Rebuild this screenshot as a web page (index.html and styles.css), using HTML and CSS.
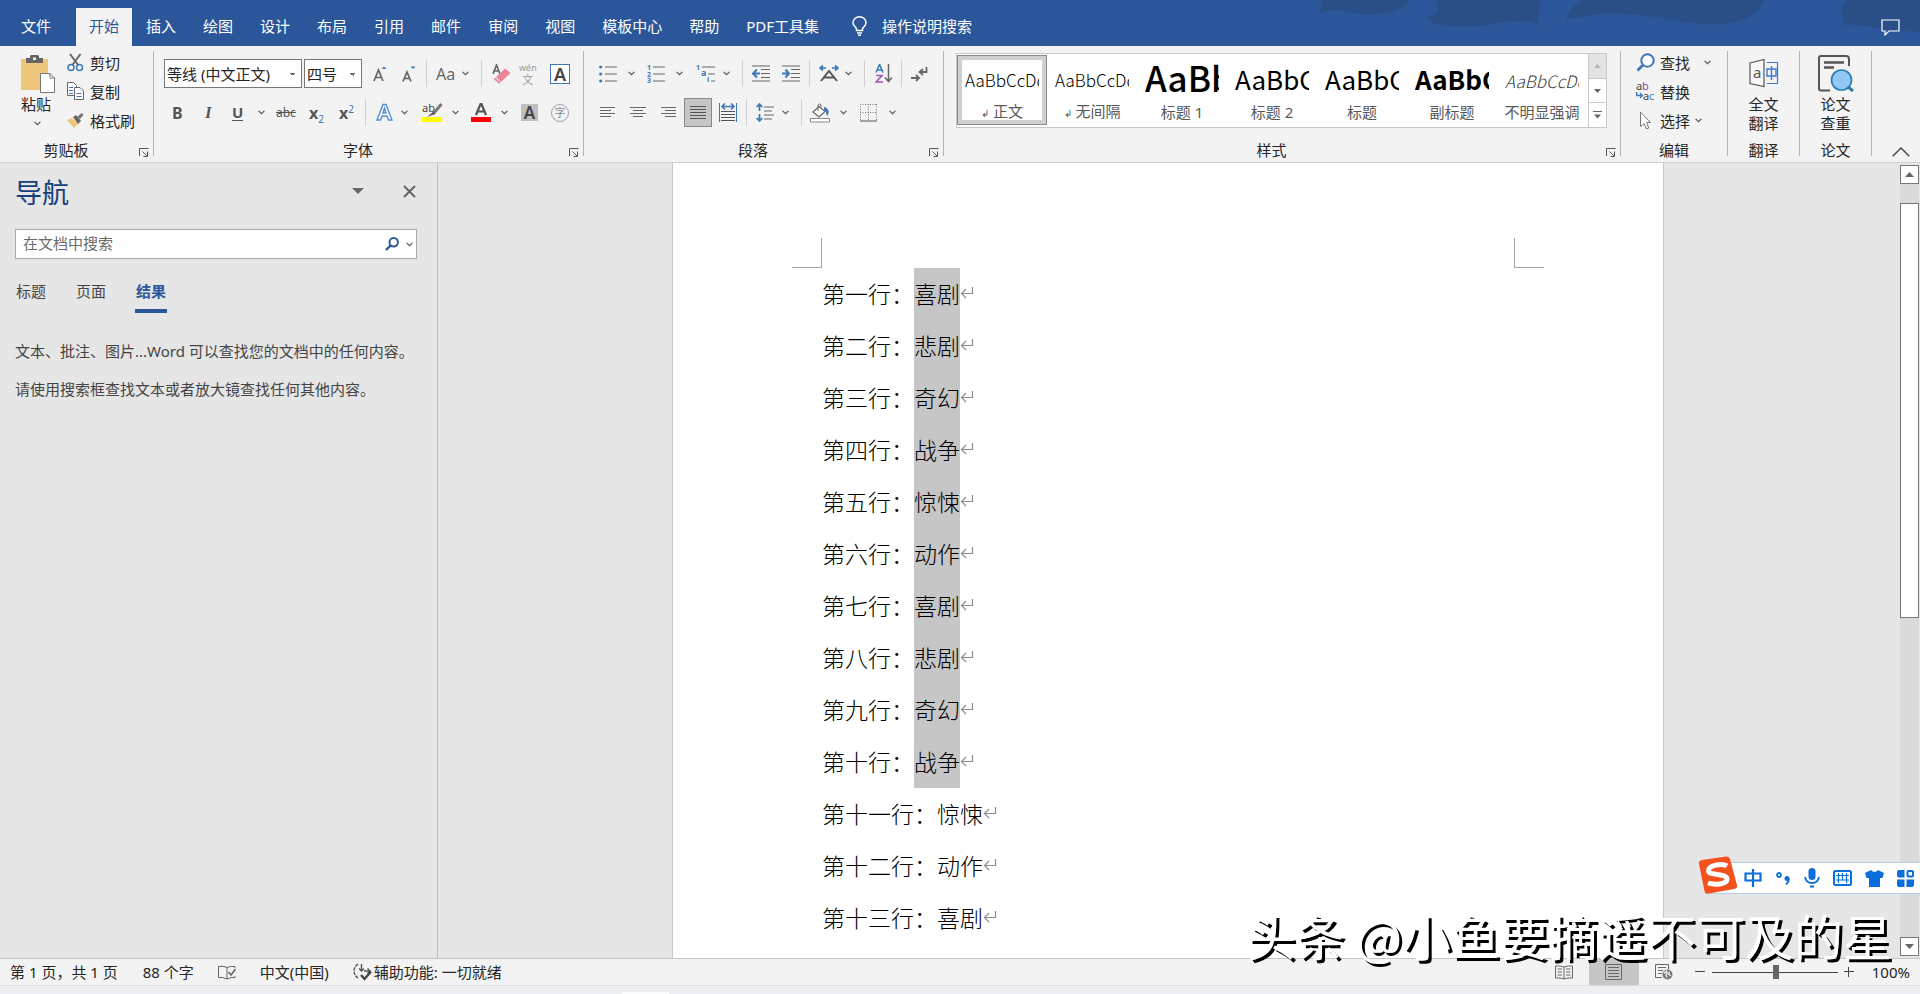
FILE: index.html
```html
<!DOCTYPE html>
<html lang="zh-CN">
<head>
<meta charset="utf-8">
<title>Word</title>
<link rel="stylesheet" href="styles.css">
</head>
<body>
<svg class="defs" aria-hidden="true">
  <symbol id="chev" viewBox="0 0 7 5"><path d="M.6.8 3.5 3.7 6.4.8" fill="none" stroke="#555" stroke-width="1.2"/></symbol>
  <symbol id="ret" viewBox="0 0 14 13"><path d="M12.500 0V6.500H2M6 2 1.500 6.500 6 11" fill="none" stroke="#8c8c8c" stroke-width="1.200"/></symbol>
  <symbol id="launch" viewBox="0 0 10 9"><path d="M.5 8V.5H9.500M3.500 3.500 8 8M8.500 3.500V8.500H4.500" fill="none" stroke="#555"/></symbol>
</svg>

<header class="tabbar">
  <svg class="swirl" width="610" height="46" viewBox="0 0 610 46" aria-hidden="true"><g fill="#2a4f87"><path d="M12 0 10 13C20 9 34 10 46 13S80 15 97 5L98 0Z"/><path d="M115 14C122 19 132 14 126 4L128 0H230L228 25C212 17 192 22 174 25S120 30 115 14Z"/><path d="M256 20C258 8 268 4 274 0H454C450 18 420 26 390 24 350 20 310 5 256 20Z"/><path d="M536 0C530 10 531 18 534 20L533 27C540 22 552 26 565 28L575 30 610 32V0Z"/></g></svg>
  <nav class="tabs">
    <button class="tab file">文件</button><button class="tab on">开始</button><button class="tab">插入</button><button class="tab">绘图</button><button class="tab">设计</button><button class="tab">布局</button><button class="tab">引用</button><button class="tab">邮件</button><button class="tab">审阅</button><button class="tab">视图</button><button class="tab">模板中心</button><button class="tab">帮助</button><button class="tab">PDF工具集</button>
  </nav>
  <button class="tell"><svg width="15" height="20" viewBox="0 0 15 20"><g fill="none" stroke="#fff" stroke-width="1.500"><path d="M4.500 14.500V13C4 11 1 10 1 6.800A6.500 6 0 0 1 14 6.800C14 10 11 11 10.500 13V14.500Z"/><path d="M5 17H10M6 19.200H9"/></g></svg>操作说明搜索</button>
  <button class="comment" aria-label="批注"><svg width="19" height="17" viewBox="0 0 19 17"><path d="M1 1H18V12H8L4 16V12H1Z" fill="none" stroke="#fff" stroke-width="1.200"/></svg></button>
</header>

<section class="ribbon">
  <div class="group g-clip">
    <div class="body clip">
      <button class="paste"><svg width="35" height="39" viewBox="0 0 35 39"><path d="M0 4H27V35H0Z" fill="#eec77d"/><path d="M5 8V3H9V1Q9 0 11 0H16Q18 0 18 1V3H22V8Z" fill="#666"/><path d="M12 2.500H15V5H12Z" fill="#f3f3f3"/><path d="M19.500 18.500H29L33.500 23V37.500H19.500Z" fill="#fff" stroke="#777"/><path d="M29 18.500V23H33.500" fill="none" stroke="#777"/></svg><span>粘贴</span><svg width="7" height="5"><use href="#chev"/></svg></button>
      <div class="stack">
        <button class="cmd"><svg width="17" height="19" viewBox="0 0 17 19"><g fill="none"><path d="M3 1 11.500 12.500M13.500 1 5 12.500" stroke="#666" stroke-width="2"/><circle cx="4" cy="14.500" r="3" stroke="#3f78b5" stroke-width="1.500"/><circle cx="12.500" cy="14.500" r="3" stroke="#3f78b5" stroke-width="1.500"/></g></svg>剪切</button>
        <button class="cmd"><svg width="17" height="19" viewBox="0 0 17 19"><g fill="#fff" stroke="#666"><path d="M.5.500H6.500L9.500 3.500V13.500H.5Z"/><path d="M7.500 5.500H13L16.500 9V17.500H7.500Z"/></g><path d="M2 5.500H6M2 8.500H6M2 11.500H6M9.500 11.500H14.500M9.500 14.500H14.500" stroke="#3f78b5"/></svg>复制</button>
        <button class="cmd"><svg width="17" height="17" viewBox="0 0 17 17"><path d="M0 8 5 6 11 12 7 16Z" fill="#eec77d"/><path d="M6 5 9 3 14 9 11 12Z" fill="#666"/><path d="M10 5 14.500 1 16.500 3 13 7Z" fill="#777"/></svg>格式刷</button>
      </div>
    </div>
    <div class="label"><span>剪贴板</span><button aria-label="剪贴板选项"><svg width="10" height="9"><use href="#launch"/></svg></button></div>
  </div>
  <div class="sep"></div>

  <div class="group g-font">
    <div class="body two">
      <div class="row font1">
        <select aria-label="字体"><option>等线 (中文正文)</option></select>
        <select aria-label="字号"><option>四号</option></select>
        <button aria-label="增大字号"><svg width="16" height="16" viewBox="0 0 16 16"><path d="M1 15 5.500 4 10 15M2.500 11.500H8.500" fill="none" stroke="#666" stroke-width="1.700"/><path d="M8.500 3 11 .5 13.500 3Z" fill="#3f78b5"/></svg></button>
        <button aria-label="减小字号"><svg width="16" height="16" viewBox="0 0 16 16"><path d="M1 15.500 5 6 9 15.500M2.500 12.500H7.500" fill="none" stroke="#666" stroke-width="1.700"/><path d="M8.500 .500 11 3 13.500.5Z" fill="#3f78b5"/></svg></button>
        <i></i>
        <button class="aa">Aa</button>
        <svg width="7" height="5"><use href="#chev"/></svg>
        <i></i>
        <button aria-label="清除格式"><svg width="19" height="20" viewBox="0 0 19 20"><path d="M1 10 4.500 1 8 10M2 7H7" fill="none" stroke="#666" stroke-width="1.700"/><path d="M4 13 13 4.500 18.500 9 9 18Z" fill="#e8879a"/><path d="M2.500 14.500 8 19" stroke="#e8879a" stroke-width="2"/></svg></button>
        <button class="wen"><span>wén</span><span>文</span></button>
        <button class="boxa">A</button>
      </div>
      <div class="row font2">
        <button class="bold">B</button>
        <button class="ital">I</button>
        <button class="und">U</button>
        <svg width="7" height="5"><use href="#chev"/></svg>
        <button class="strike">abc</button>
        <button class="scr">x<sub>2</sub></button>
        <button class="scr">x<sup>2</sup></button>
        <i></i>
        <button aria-label="文本效果"><svg width="17" height="19" viewBox="0 0 17 19"><path d="M1 17 7 1.500H10L16 17H12.500L11 13H6L4.500 17ZM7 10H10L8.500 5Z" fill="#fff" stroke="#4f8fd6" stroke-width="1.400"/></svg></button>
        <svg width="7" height="5"><use href="#chev"/></svg>
        <button aria-label="突出显示"><svg width="21" height="19" viewBox="0 0 21 19"><text x="0" y="9" class="t11">ab</text><path d="M19.500 1 11 11" stroke="#777" stroke-width="3"/><path d="M11 9 13 11 5 14Z" fill="#555"/><path d="M0 14H20V19H0Z" fill="#ff0"/></svg></button>
        <svg width="7" height="5"><use href="#chev"/></svg>
        <button aria-label="字体颜色"><svg width="21" height="19" viewBox="0 0 21 19"><path d="M5 12 9.500 1H10.500L15 12M6.500 8.500H13.500" fill="none" stroke="#555" stroke-width="2.200"/><path d="M0 14H20V19H0Z" fill="#f00"/></svg></button>
        <svg width="7" height="5"><use href="#chev"/></svg>
        <button class="shadea">A</button>
        <button class="zi">字</button>
      </div>
    </div>
    <div class="label"><span>字体</span><button aria-label="字体选项"><svg width="10" height="9"><use href="#launch"/></svg></button></div>
  </div>
  <div class="sep"></div>

  <div class="group g-para">
    <div class="body two">
      <div class="row para1">
        <button aria-label="项目符号"><svg width="19" height="18" viewBox="0 0 19 18"><g fill="#3f78b5"><circle cx="1.700" cy="2" r="1.600"/><circle cx="1.700" cy="9" r="1.600"/><circle cx="1.700" cy="16" r="1.600"/></g><path d="M6 2H18M6 9H18M6 16H18" stroke="#666"/></svg></button>
        <svg width="7" height="5"><use href="#chev"/></svg>
        <button aria-label="编号"><svg width="19" height="18" viewBox="0 0 19 18"><g class="num"><text x="0" y="5">1</text><text x="0" y="12">2</text><text x="0" y="18">3</text></g><path d="M6 2H18M6 9H18M6 16H18" stroke="#666"/></svg></button>
        <svg width="7" height="5"><use href="#chev"/></svg>
        <button aria-label="多级列表"><svg width="20" height="18" viewBox="0 0 20 18"><g class="num"><text x="0" y="5">1</text><text x="5" y="11" class="t10">a</text><text x="11" y="17">i</text></g><path d="M6 2H19M12 9H19M15 16H19" stroke="#666"/></svg></button>
        <svg width="7" height="5"><use href="#chev"/></svg>
        <i></i>
        <button aria-label="减少缩进"><svg width="18" height="17" viewBox="0 0 18 17"><path d="M0 1H18M9 4.500H18M9 8.500H18M9 12.500H18M0 16H18" stroke="#666" stroke-width="1.200"/><path d="M8 8.500H2M5 4.500 1 8.500 5 12.500" fill="none" stroke="#3f78b5" stroke-width="2"/></svg></button>
        <button aria-label="增加缩进"><svg width="18" height="17" viewBox="0 0 18 17"><path d="M0 1H18M9 4.500H18M9 8.500H18M9 12.500H18M0 16H18" stroke="#666" stroke-width="1.200"/><path d="M0 8.500H6M3.500 4.500 7 8.500 3.500 12.500" fill="none" stroke="#3f78b5" stroke-width="2"/></svg></button>
        <i></i>
        <button aria-label="中文版式"><svg width="20" height="17" viewBox="0 0 20 17"><path d="M2 16 10 6 18 16M5.500 12.500H14.500" fill="none" stroke="#555" stroke-width="2"/><path d="M7 3H1.500M4 .5 1 3 4 5.500M13 3H18.500M16 .5 19 3 16 5.500" fill="none" stroke="#3f78b5" stroke-width="1.700"/></svg></button>
        <svg width="7" height="5"><use href="#chev"/></svg>
        <i></i>
        <button aria-label="排序"><svg width="18" height="19" viewBox="0 0 18 19"><path d="M1 8.500 4.500.5 8 8.500M2.500 6H6.500" fill="none" stroke="#3f78b5" stroke-width="1.600"/><path d="M1 11.500H7L1 18H8" fill="none" stroke="#9a5bb5" stroke-width="1.600"/><path d="M13.500 0V17.500M10 13.500 13.500 17.500 17 13.500" fill="none" stroke="#666" stroke-width="1.500"/></svg></button>
        <i></i>
        <button aria-label="显示编辑标记"><svg width="17" height="16" viewBox="0 0 17 16"><path d="M15.500 1V6H9M12 3 8.500 6 12 9M0 12H8M5 9 8 12 5 15" fill="none" stroke="#666" stroke-width="1.800"/></svg></button>
      </div>
      <div class="row para2">
        <button aria-label="左对齐"><svg width="15" height="11" viewBox="0 0 15 11"><path d="M0 .5H15M0 3.500H11M0 6.500H15M0 9.500H11" stroke="#666"/></svg></button>
        <button aria-label="居中"><svg width="16" height="11" viewBox="0 0 16 11"><path d="M0 .5H16M3 3.500H13M0 6.500H16M3 9.500H13" stroke="#666"/></svg></button>
        <button aria-label="右对齐"><svg width="15" height="11" viewBox="0 0 15 11"><path d="M0 .5H15M4 3.500H15M0 6.500H15M4 9.500H15" stroke="#666"/></svg></button>
        <button class="just" aria-label="两端对齐"><svg width="16" height="14" viewBox="0 0 16 14"><path d="M0 .5H16M0 3.500H16M0 6.500H16M0 9.500H16M0 12.500H16" stroke="#555"/></svg></button>
        <button aria-label="分散对齐"><svg width="18" height="19" viewBox="0 0 18 19"><path d="M.5 0V19M17.500 0V19" stroke="#3f78b5"/><path d="M3 3.500H15M6 .5 3 3.500 6 6.500M12 .5 15 3.500 12 6.500" fill="none" stroke="#3f78b5" stroke-width="1.600"/><path d="M2 8.500H16M2 11.500H16M2 14.500H16M2 17.500H16" stroke="#555"/></svg></button>
        <i></i>
        <button aria-label="行距"><svg width="18" height="19" viewBox="0 0 18 19"><path d="M3.500 1V8M3.500 11V18M.7 4 3.500 1 6.300 4M.7 15 3.500 18 6.300 15" fill="none" stroke="#3f78b5" stroke-width="1.700"/><path d="M8 4H18M8 8H16M8 12H18M8 16H16" stroke="#666"/></svg></button>
        <svg width="7" height="5"><use href="#chev"/></svg>
        <i></i>
        <button aria-label="底纹"><svg width="20" height="20" viewBox="0 0 20 20"><path d="M3 9 9 3.500 15 8.500 9 14Z" fill="#fff" stroke="#666" stroke-width="1.200"/><path d="M8 8V2Q9.500-.5 11 2V4" fill="none" stroke="#666"/><path d="M14 4C19 5 20 10 17 13 16 10 16 8 14 7Z" fill="#3f78b5"/><path d="M.5 15.500H19.500V19H.5Z" fill="#fff" stroke="#888"/></svg></button>
        <svg width="7" height="5"><use href="#chev"/></svg>
        <button aria-label="边框"><svg width="17" height="18" viewBox="0 0 17 18"><path d="M0 .5H17M0 8.500H17M.5 0V17M8.500 0V17M16.500 0V17" stroke="#777" stroke-dasharray="1 1.500"/><path d="M0 17H17" stroke="#555"/></svg></button>
        <svg width="7" height="5"><use href="#chev"/></svg>
      </div>
    </div>
    <div class="label"><span>段落</span><button aria-label="段落选项"><svg width="10" height="9"><use href="#launch"/></svg></button></div>
  </div>
  <div class="sep"></div>

  <div class="group g-style">
    <div class="body sty">
      <div class="gallery">
        <div class="items">
          <button class="item on"><span class="pv">AaBbCcDd</span><span class="nm"><small>↲</small> 正文</span></button>
          <button class="item"><span class="pv">AaBbCcDd</span><span class="nm"><small>↲</small> 无间隔</span></button>
          <button class="item"><span class="pv h1">AaBb</span><span class="nm">标题 1</span></button>
          <button class="item"><span class="pv h2">AaBbC</span><span class="nm">标题 2</span></button>
          <button class="item"><span class="pv h2">AaBbC</span><span class="nm">标题</span></button>
          <button class="item"><span class="pv h2 strong">AaBbC</span><span class="nm">副标题</span></button>
          <button class="item"><span class="pv em">AaBbCcDd</span><span class="nm">不明显强调</span></button>
        </div>
        <div class="gscroll">
          <button class="off" aria-label="上一行"><svg width="7" height="4"><path d="M0 4 3.500 0 7 4Z" fill="#b5b5b5"/></svg></button>
          <button aria-label="下一行"><svg width="7" height="4"><path d="M0 0 3.500 4 7 0Z" fill="#666"/></svg></button>
          <button aria-label="其他"><svg width="9" height="8"><path d="M0 .5H9" stroke="#666"/><path d="M1 3.500 4.500 7.500 8 3.500Z" fill="#666"/></svg></button>
        </div>
      </div>
    </div>
    <div class="label"><span>样式</span><button aria-label="样式选项"><svg width="10" height="9"><use href="#launch"/></svg></button></div>
  </div>
  <div class="sep"></div>

  <div class="group g-edit">
    <div class="body">
      <div class="stack">
        <button class="cmd"><svg width="19" height="19" viewBox="0 0 19 19"><circle cx="11.500" cy="7.500" r="6.200" fill="#fff" stroke="#3f78b5" stroke-width="2"/><path d="M7 12 1.500 17.500" stroke="#3f78b5" stroke-width="2.800"/></svg>查找<svg class="far" width="7" height="5"><use href="#chev"/></svg></button>
        <button class="cmd"><svg width="19" height="19" viewBox="0 0 19 19"><g class="t11"><text x="0" y="8">a</text><text x="6" y="8" fill="#8a4bab">b</text><text x="7" y="18">a</text><text x="13" y="18" fill="#3f78b5">c</text></g><path d="M.7 10V13.500H6M4 11 6.500 13.500 4 16" fill="none" stroke="#3f78b5" stroke-width="1.300"/></svg>替换</button>
        <button class="cmd"><svg width="19" height="19" viewBox="0 0 19 19"><path d="M4.500 1V15.500L8 12.500 10.500 18 12.800 17 10.500 11.500H14.500Z" fill="#fff" stroke="#777"/></svg>选择<svg width="7" height="5"><use href="#chev"/></svg></button>
      </div>
    </div>
    <div class="label"><span>编辑</span></div>
  </div>
  <div class="sep"></div>

  <div class="group g-addin">
    <div class="body"><button class="big"><svg width="30" height="38" viewBox="0 0 30 38"><path d="M1 8 15 4.500V31.500L1 28.500Z" fill="#f8f8f8" stroke="#555" stroke-width="1.200"/><text x="4" y="23" class="t14">a</text><path d="M18 7.500H28.500V28.500H18" fill="none" stroke="#3a78d8" stroke-width="1.200"/><path d="M18 14H27V21H18ZM22.500 11V25" fill="none" stroke="#3a78d8" stroke-width="1.400"/></svg><span>全文</span><span>翻译</span></button></div>
    <div class="label"><span>翻译</span></div>
  </div>
  <div class="sep"></div>

  <div class="group g-addin">
    <div class="body"><button class="big"><svg width="36" height="38" viewBox="0 0 36 38"><path d="M12 35.500H3Q1 35.500 1 33.500V3Q1 1 3 1H28Q31 1 31 4V11" fill="none" stroke="#555" stroke-width="2"/><path d="M6 7.500H26M6 12.500H16" stroke="#555" stroke-width="2.500"/><path d="M29 31 35 36" stroke="#2c7cb0" stroke-width="3"/><circle cx="23.500" cy="25" r="10" fill="#93c8f6" stroke="#2c7cb0" stroke-width="1.700"/></svg><span>论文</span><span>查重</span></button></div>
    <div class="label"><span>论文</span></div>
  </div>
  <div class="sep"></div>
  <button class="collapse" aria-label="折叠功能区"><svg width="18" height="10" viewBox="0 0 18 10"><path d="M.7 9.300 9 1 17.300 9.300" fill="none" stroke="#444" stroke-width="1.400"/></svg></button>
</section>

<main class="work">
  <aside class="pane">
    <div class="phead"><h2>导航</h2><button aria-label="选项"><svg width="12" height="6"><path d="M0 0H12L6 6Z" fill="#666"/></svg></button><button aria-label="关闭"><svg width="13" height="13"><path d="M1 1 12 12M12 1 1 12" stroke="#666" stroke-width="2"/></svg></button></div>
    <div class="search"><input type="text" aria-label="在文档中搜索" placeholder="在文档中搜索"><button aria-label="搜索"><svg width="14" height="14" viewBox="0 0 14 14"><circle cx="8.700" cy="5.300" r="4.200" fill="none" stroke="#2b579a" stroke-width="2"/><path d="M5.500 8.500 1 13" stroke="#2b579a" stroke-width="2.400"/></svg></button><button aria-label="搜索选项"><svg width="7" height="5"><use href="#chev"/></svg></button></div>
    <div class="ptabs"><button>标题</button><button>页面</button><button class="on">结果</button></div>
    <p>文本、批注、图片...Word 可以查找您的文档中的任何内容。</p>
    <p>请使用搜索框查找文本或者放大镜查找任何其他内容。</p>
  </aside>
  <div class="canvas">
    <article class="page">
      <div class="marks"><b class="ml"></b><b class="mr"></b></div>
      <div class="text">
        <p>第一行：<mark>喜剧</mark><svg width="14" height="13"><use href="#ret"/></svg></p>
        <p>第二行：<mark>悲剧</mark><svg width="14" height="13"><use href="#ret"/></svg></p>
        <p>第三行：<mark>奇幻</mark><svg width="14" height="13"><use href="#ret"/></svg></p>
        <p>第四行：<mark>战争</mark><svg width="14" height="13"><use href="#ret"/></svg></p>
        <p>第五行：<mark>惊悚</mark><svg width="14" height="13"><use href="#ret"/></svg></p>
        <p>第六行：<mark>动作</mark><svg width="14" height="13"><use href="#ret"/></svg></p>
        <p>第七行：<mark>喜剧</mark><svg width="14" height="13"><use href="#ret"/></svg></p>
        <p>第八行：<mark>悲剧</mark><svg width="14" height="13"><use href="#ret"/></svg></p>
        <p>第九行：<mark>奇幻</mark><svg width="14" height="13"><use href="#ret"/></svg></p>
        <p>第十行：<mark>战争</mark><svg width="14" height="13"><use href="#ret"/></svg></p>
        <p>第十一行：惊悚<svg width="14" height="13"><use href="#ret"/></svg></p>
        <p>第十二行：动作<svg width="14" height="13"><use href="#ret"/></svg></p>
        <p>第十三行：喜剧<svg width="14" height="13"><use href="#ret"/></svg></p>
      </div>
    </article>
  </div>
  <div class="vbar">
    <button aria-label="向上滚动"><svg width="9" height="5"><path d="M0 5 4.500 0 9 5Z" fill="#666"/></svg></button>
    <div class="track"><div class="thumb"></div></div>
    <button aria-label="向下滚动"><svg width="9" height="5"><path d="M0 0H9L4.500 5Z" fill="#666"/></svg></button>
  </div>
</main>

<footer class="status">
  <span class="s-page">第 1 页，共 1 页</span>
  <span class="s-words">88 个字</span>
  <svg class="s-book" width="18" height="15" viewBox="0 0 18 15"><path d="M9 2.500Q5 .5.500 1.500V12.500Q5 12 9 14Q13 12 17 12.500V11M9 2.500V14M9 2.500Q12 1 17 1.500V3" fill="none" stroke="#666"/><path d="M10.500 7 13 10 17.500 4" fill="none" stroke="#666" stroke-width="1.600"/></svg>
  <span class="s-lang">中文(中国)</span>
  <svg class="s-acc" width="19" height="18" viewBox="0 0 19 18"><path d="M5 1Q1 4 1 8T5 15" fill="none" stroke="#555" stroke-width="1.400" stroke-dasharray="3.500 1"/><path d="M8.500 1V8M6 5.500 8.500 8 11 5.500M11 8H17M14.500 5.500 17 8 14.500 10.500" fill="none" stroke="#555" stroke-width="1.400"/><path d="M8 12 11.500 16 18 8.500" fill="none" stroke="#444" stroke-width="2.400"/></svg>
  <span class="s-ok">辅助功能: 一切就绪</span>
  <button class="view" aria-label="阅读视图"><svg width="18" height="15" viewBox="0 0 18 15"><path d="M9 2Q5 .5.500 1V13Q5 12.500 9 14Q13 12.500 17.500 13V1Q13 .5 9 2V14M2.500 4H7M2.500 7H7M2.500 10H7M11 4H15.500M11 7H15.500M11 10H15.500" fill="none" stroke="#666"/></svg></button>
  <button class="view on" aria-label="页面视图"><svg width="17" height="16" viewBox="0 0 17 16"><path d="M.5.500H16.500V15.500H.5ZM3 3.500H14M3 6.500H14M3 9.500H14M3 12.500H14" fill="none" stroke="#666"/></svg></button>
  <button class="view" aria-label="Web 版式"><svg width="18" height="16" viewBox="0 0 18 16"><path d="M7 13.500H.5V.5H13.500V5M3 3.500H11M3 6.500H8M3 9.500H7" fill="none" stroke="#666"/><circle cx="12.500" cy="10.500" r="5" fill="#777"/><path d="M9 9.500 11.500 7 12 9.500 11 11 12 13.500M14.500 7.500 13.500 10 16 12" fill="none" stroke="#f3f3f3" stroke-width="1.300"/></svg></button>
  <button class="zoom" aria-label="缩小"><svg width="10" height="10"><path d="M0 4.500H10" stroke="#444"/></svg></button>
  <input type="range" min="10" max="190" value="102" aria-label="显示比例">
  <button class="zoom" aria-label="放大"><svg width="10" height="10"><path d="M0 4.500H10M4.500 0V10" stroke="#444"/></svg></button>
  <span class="s-pct">100%</span>
</footer>
<div class="taskbar"><span></span></div>

<div class="ime">
  <svg class="logo" width="40" height="38" viewBox="0 0 40 38"><path d="M1 8Q0 5 4 4L28 .5Q31 0 32 3L39 29Q40 32 36 33L11 37.500Q7 38 6.500 35Z" fill="#f4511e"/><path d="M29 10C24 7 10 9 10.500 15 11 20 29 17 29 23 29 29 16 29 10 27" fill="none" stroke="#fff" stroke-width="5"/></svg>
  <svg width="18" height="18" viewBox="0 0 18 18"><path d="M1.500 4.500H16.500V11.500H1.500ZM9 0V18" fill="none" stroke="#0a6fdb" stroke-width="2.200"/></svg>
  <svg width="16" height="14" viewBox="0 0 16 14"><circle cx="4" cy="4" r="2" fill="none" stroke="#0a6fdb" stroke-width="1.800"/><circle cx="12" cy="7.500" r="2.500" fill="#0a6fdb"/><path d="M14 8Q14 11 11 13.500" fill="none" stroke="#0a6fdb" stroke-width="1.800"/></svg>
  <svg width="16" height="20" viewBox="0 0 16 20"><rect x="4.500" y="0" width="7" height="12" rx="3.500" fill="#0a6fdb"/><path d="M1 9Q2 15 8 15T15 9M6 18.500H10" fill="none" stroke="#0a6fdb" stroke-width="1.800"/></svg>
  <svg width="19" height="16" viewBox="0 0 19 16"><rect x="1" y="1" width="17" height="14" rx="1.500" fill="none" stroke="#0a6fdb" stroke-width="2"/><path d="M3 5.500H16M3 10H16M5.500 3V13M9.500 3V10M13.500 3V13" stroke="#0a6fdb" stroke-width="1.200"/></svg>
  <svg width="19" height="17" viewBox="0 0 19 17"><path d="M6 0Q9.500 4 13 0L19 3 17.500 8H15V17H4V8H1.500L0 3Z" fill="#0a6fdb"/></svg>
  <svg width="17" height="17" viewBox="0 0 17 17"><g fill="#0a6fdb"><path d="M2 0H7.500V7.500H2Q0 7.500 0 5.500V2Q0 0 2 0ZM0 9.500H7.500V17H2Q0 17 0 15ZM9.500 9.500H17V15Q17 17 15 17H9.500Z"/></g><rect x="10.500" y="1" width="5.500" height="5.500" rx="1" fill="none" stroke="#0a6fdb" stroke-width="2"/></svg>
</div>
<div class="sign">头条 @小鱼要摘遥不可及的星</div>
</body>
</html>
```
FILE: styles.css
```css
* { box-sizing: border-box; }
body {
  margin: 0;
  height: 100vh;
  display: flex;
  flex-direction: column;
  overflow: hidden;
  position: relative;
  background: #e6e6e6;
  color: #262626;
  font: 15px/20px "Noto Sans", "Noto Sans CJK SC", sans-serif;
}
button {
  margin: 0;
  padding: 0;
  border: 0;
  background: none;
  font: inherit;
  color: inherit;
  white-space: nowrap;
}
svg { display: block; flex: none; }
p, h2 { margin: 0; }
.defs { position: absolute; width: 0; height: 0; }

.tabbar {
  flex: none;
  height: 46px;
  display: flex;
  align-items: stretch;
  background: #2b579a;
  color: #fff;
  position: relative;
}
.swirl { position: absolute; right: 0; top: 0; }
.tabs { display: flex; gap: 1px; padding-top: 8px; }
.tab { padding: 0 13px 2px; height: 38px; }
.tab.file { padding: 0 24px 2px 21px; }
.tab.on { background: #f3f3f3; color: #2b579a; }
.tell { display: flex; align-items: center; gap: 15px; margin-left: 20px; padding-top: 6px; }
.comment { margin-left: auto; padding: 8px 20px 0 0; position: relative; }

.ribbon {
  flex: none;
  display: flex;
  height: 117px;
  background: #f3f3f3;
  border-bottom: 1px solid #d2d2d2;
}
.sep { width: 1px; margin: 5px 0 6px; background: #b5b5b5; }
.group { display: flex; flex-direction: column; flex: none; }
.g-clip { width: 153px; }
.g-font { width: 429px; }
.g-para { width: 359px; }
.g-style { flex: 1 1 0; min-width: 0; }
.g-edit { width: 106px; }
.g-addin { width: 71px; }
.body { height: 94px; }
.label { display: flex; align-items: center; height: 20px; }
.label span { flex: 1; text-align: center; }
.label button { width: 14px; padding-top: 4px; margin-left: 7px; }
.clip { display: flex; gap: 11px; padding-left: 21px; }
.paste { display: flex; flex-direction: column; align-items: flex-start; width: 35px; padding-top: 9px; }
.paste span { line-height: 20px; }
.paste svg:last-child { margin: 7px 0 0 13px; }
.stack { display: flex; flex-direction: column; padding-top: 2px; }
.cmd { display: flex; align-items: center; gap: 6px; height: 29px; }
.g-edit .stack { padding-left: 15px; }
.g-edit .cmd { gap: 5px; }
.cmd .far { margin-left: 9px; }
.two { display: flex; flex-direction: column; gap: 10px; padding-top: 13px; }
.row { display: grid; height: 29px; align-items: center; justify-items: start; }
.row i { width: 1px; height: 27px; background: #d0d0d0; }
.font1 { padding-left: 10px; grid-template-columns: 140px 69px 29px 24px 10px 26px 19px 11px 27px 31px 20px; }
.font2 { padding-left: 18px; grid-template-columns: 31px 29px 26px 18px 33px 30px 26px 11px 25px 21px 30px 19px 30px 20px 30px 18px; }
.para1 { padding-left: 15px; grid-template-columns: 29px 19px 29px 20px 27px 19px 10px 30px 27px 10px 26px 19px 11px 26px 10px 17px; }
.para2 { padding-left: 16px; grid-template-columns: 30px 31px 23px 35px 27px 10px 26px 19px 9px 30px 20px 29px 7px; }
select {
  appearance: none;
  width: 138px;
  height: 29px;
  margin: 0;
  padding: 0 2px;
  border: 1px solid #767676;
  border-radius: 0;
  background-color: #fff;
  background-image: linear-gradient(45deg, transparent 50%, #666 50%), linear-gradient(-45deg, transparent 50%, #666 50%);
  background-size: 3px 3px, 3px 3px;
  background-position: right 8px top 13px, right 5px top 13px;
  background-repeat: no-repeat;
  font: inherit;
  color: #262626;
}
select + select { width: 58px; }
.aa { font-size: 16px; color: #666; }
.wen { display: flex; flex-direction: column; align-items: center; font-size: 9px; line-height: 12px; color: #9a9a9a; }
.wen span:last-child { font-size: 11px; }
.boxa { width: 20px; height: 20px; border: 1px solid #3f78b5; background: #fff; font-weight: 600; font-size: 18px; line-height: 18px; color: #444; }
.bold { font-weight: 700; font-size: 16px; color: #555; }
.ital { font: italic 700 17px/20px "Liberation Serif", serif; color: #555; padding-left: 2px; }
.und { font-weight: 700; font-size: 15px; line-height: 16px; color: #555; border-bottom: 1px solid #555; }
.strike { font-size: 12px; text-decoration: line-through; color: #555; }
.scr { font-weight: 700; font-size: 16px; color: #555; }
.scr sub, .scr sup { font-weight: 400; font-size: 10px; line-height: 0; color: #3f78b5; }
.shadea { width: 17px; height: 17px; background: #bfbfbf; font-weight: 600; font-size: 17px; line-height: 17px; color: #444; }
.zi { width: 18px; height: 18px; border: 1px solid #a5a0a8; border-radius: 50%; font-size: 11px; line-height: 15px; color: #8d8890; }
.t11 { font-size: 11px; fill: #444; }
.t11 [fill="#8a4bab"] { fill: #8a4bab; }
.t10 { font-size: 10px; }
.t14 { font-size: 15px; fill: #555; }
.num { font-size: 7px; font-weight: 700; fill: #3f78b5; }
.num .t10 { font-size: 9px; }
.just { display: grid; place-items: center; width: 28px; height: 29px; border: 1px solid #888; background: #c6c6c6; }

.sty { padding: 7px 13px 0 12px; }
.gallery { display: flex; height: 75px; border: 1px solid #c8c8c8; background: #fff; }
.items { display: flex; flex: 1; min-width: 0; overflow: hidden; }
.item { flex: none; width: 90px; height: 70px; margin-top: 1px; padding: 5px 8px 0; text-align: center; }
.item.on { box-shadow: inset 0 0 0 1px #8a8a8a, inset 0 0 0 5px #d0d0ce; }
.pv { display: block; height: 39px; overflow: hidden; text-align: left; font: 300 17px/34px "Noto Sans CJK SC", sans-serif; color: #000; }
.pv.h1 { font-size: 35px; font-weight: 500; line-height: 26px; }
.pv.h2 { font-size: 26px; line-height: 30px; font-weight: 400; }
.pv.strong { font-weight: 700; }
.pv.em { font-style: italic; color: #404040; }
.nm { display: block; line-height: 18px; color: #595959; margin: 0 -4px; }
.nm small { font-size: 10px; }
.gscroll { display: flex; flex-direction: column; width: 18px; border-left: 1px solid #c8c8c8; }
.gscroll button { flex: 1; display: grid; place-items: center; border-top: 1px solid #c8c8c8; }
.gscroll .off { background: #e3e3e3; border-top: 0; }
.big { display: flex; flex-direction: column; align-items: center; width: 100%; padding-top: 9px; line-height: 19px; }
.big svg { margin-bottom: 2px; }
.collapse { width: 48px; padding-left: 20px; margin: auto 0 5px; }

.work { flex: 1; min-height: 0; display: flex; overflow: hidden; }
.pane { flex: none; width: 438px; padding: 0 20px 0 15px; border-right: 1px solid #bcbcbc; color: #444; }
.phead { display: flex; align-items: center; padding-top: 9px; height: 47px; }
.phead h2 { flex: 1; font-weight: 400; font-size: 27px; line-height: 32px; padding-top: 3px; color: #143f7a; }
.phead button { margin-right: 1px; }
.phead button + button { margin-left: 38px; }
.search { display: flex; align-items: center; height: 30px; margin: 19px 0 0; border: 1px solid #ababab; background: #fff; }
.search input { flex: 1; min-width: 0; border: 0; outline: 0; padding: 0 7px 3px; background: none; font: inherit; color: #444; }
.search input::placeholder { color: #6b6b6b; opacity: 1; }
.search button + button { margin: 0 3px 0 7px; }
.ptabs { display: flex; gap: 28px; margin: 21px 0 26px; }
.ptabs button { height: 33px; padding: 0 1px 8px; border-bottom: 4px solid transparent; }
.ptabs .on { color: #2b579a; font-weight: 700; border-color: #2b579a; }
.pane p { margin-bottom: 14px; line-height: 24px; white-space: nowrap; }

.canvas { flex: 1; min-width: 0; display: flex; justify-content: center; overflow: hidden; padding-right: 2px; }
.page { width: 992px; background: #fff; border: 1px solid #c6c6c6; border-width: 0 1px; align-self: stretch; }
.marks { display: flex; justify-content: space-between; padding: 75px 119px 0; }
.marks b { width: 30px; height: 30px; border-bottom: 1px solid #a5a5a5; }
.ml { border-right: 1px solid #a5a5a5; }
.mr { border-left: 1px solid #a5a5a5; }
.text { padding-left: 149px; font: 300 23px/50px "Noto Sans CJK SC", sans-serif; color: #000; }
.text p { display: flex; align-items: center; height: 52px; }
.text p, .text mark { padding-bottom: 2px; }
.text mark { align-self: flex-start; background: #c6c6c6; color: inherit; }
.vbar { flex: none; display: flex; flex-direction: column; width: 20px; padding: 2px 1px 2px 0; background: #e6e6e6; }
.vbar button { flex: none; display: grid; place-items: center; height: 19px; border: 1px solid #777; background: #fff; }
.track { flex: 1; display: flex; flex-direction: column; background: #dadada; padding-top: 19px; }
.thumb { flex: 22; border: 1px solid #777; background: #fff; }
.track::after { content: ""; flex: 17; }

.status { flex: none; display: flex; align-items: center; height: 28px; padding: 0 10px; border-top: 1px solid #c6c6c6; border-bottom: 1px solid #dcdcdc; background: #f3f3f3; white-space: nowrap; }
.s-words { margin-left: 25px; }
.s-book { margin-left: 24px; }
.s-lang { margin-left: 24px; }
.s-acc { margin-left: 24px; }
.s-ok { margin: 0 auto 0 2px; }
.view { display: grid; place-items: center; width: 50px; height: 26px; }
.view.on { background: #c6c6c6; }
.zoom { padding: 0 7px 0 6px; }
input[type=range] { appearance: none; width: 126px; height: 16px; margin: 0; background: linear-gradient(#444, #444) center / 100% 1px no-repeat; }
input[type=range]::-webkit-slider-thumb { appearance: none; width: 6px; height: 14px; background: #666; }
.s-pct { margin-left: 11px; }
.taskbar { flex: none; height: 8px; padding: 6px 0 0 622px; background: #edeff4; }
.taskbar span { display: block; width: 47px; height: 2px; background: #fafbfd; }

.ime { position: absolute; right: 0; bottom: 100px; display: flex; align-items: center; gap: 13px; width: 215px; height: 32px; padding-right: 6px; border: 1px solid #b5cbe8; border-right: 0; background: #fff; justify-content: flex-end; }
.ime .logo { position: absolute; left: -8px; bottom: -1px; }
.sign { position: absolute; right: 28px; bottom: 24px; font: 400 49px/70px "Noto Sans CJK SC", sans-serif; color: #fff; text-shadow: 3px 3px 0 #000; white-space: nowrap; }
```
